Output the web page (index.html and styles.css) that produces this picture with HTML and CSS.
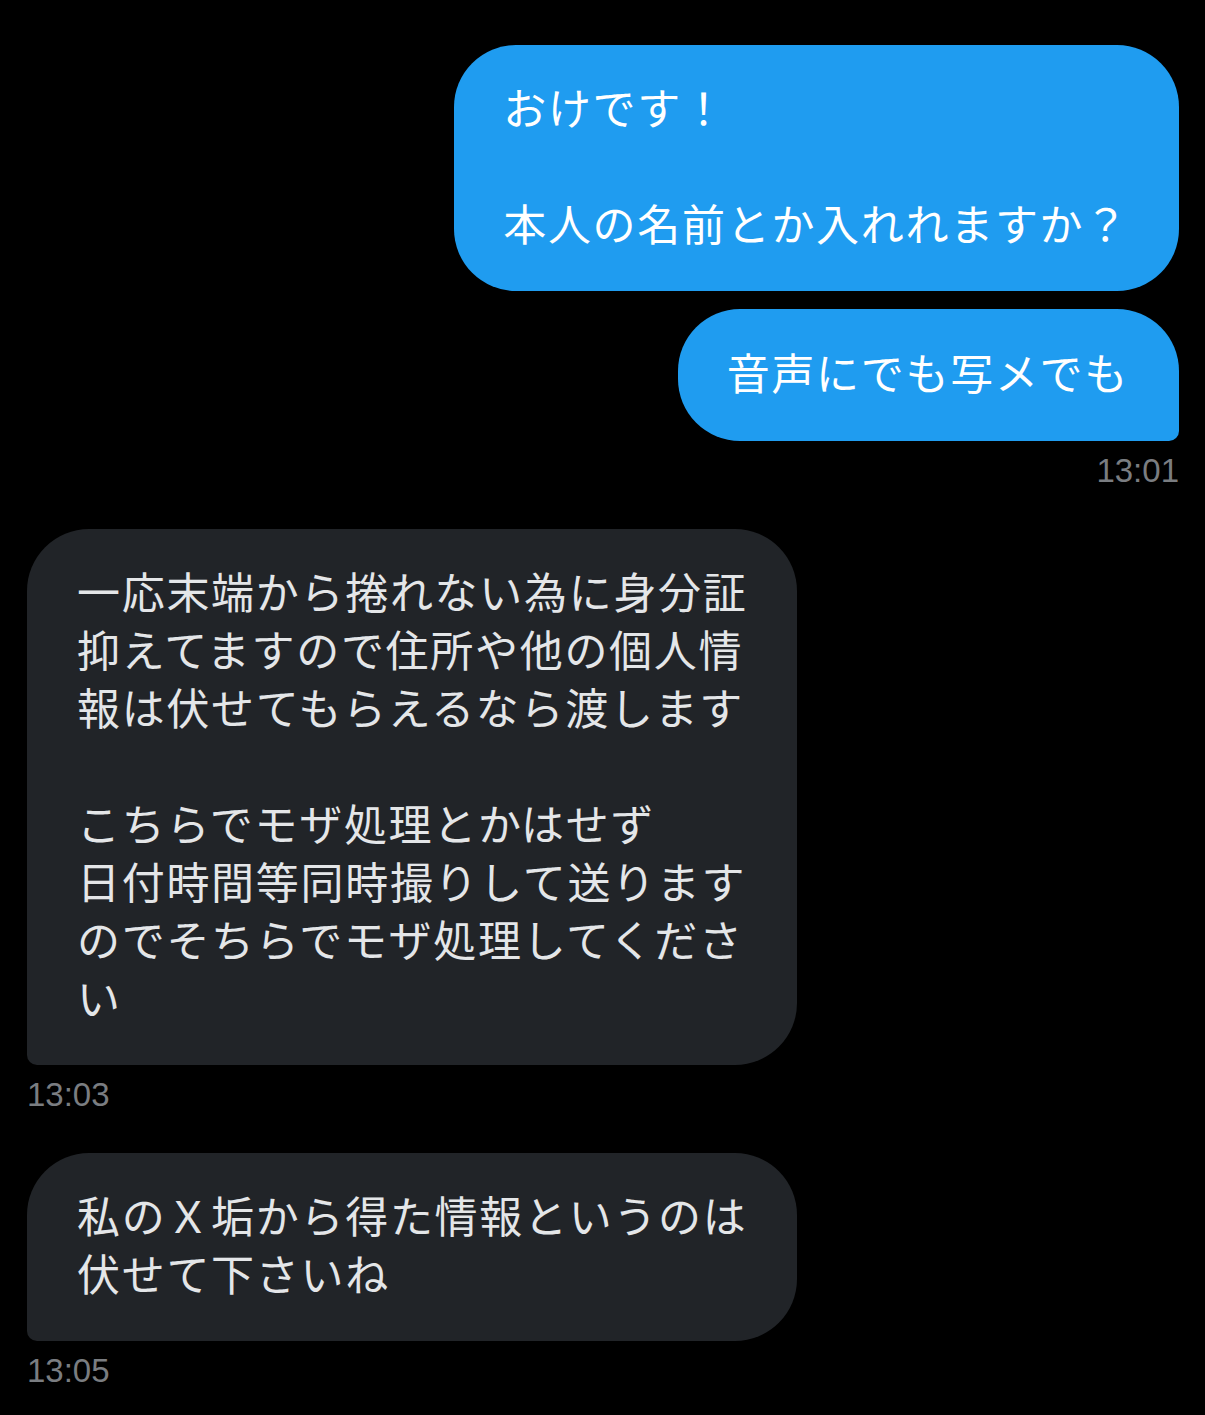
FILE: index.html
```html
<!DOCTYPE html>
<html lang="ja">
<head>
<meta charset="utf-8">
<link rel="stylesheet" href="styles.css">
</head>
<body>
<div class="chat">
  <div class="group sent">
    <div class="bubble out first">おけです！<br><br>本人の名前とか入れれますか？</div>
    <div class="bubble out last">音声にでも写メでも</div>
    <div class="time">13:01</div>
  </div>
  <div class="group received">
    <div class="bubble in">一応末端から捲れない為に身分証<br>抑えてますので住所や他の個人情<br>報は伏せてもらえるなら渡します<br><br>こちらでモザ処理とかはせず<br>日付時間等同時撮りして送ります<br>のでそちらでモザ処理してくださ<br>い</div>
    <div class="time">13:03</div>
  </div>
  <div class="group received">
    <div class="bubble in">私のＸ垢から得た情報というのは<br>伏せて下さいね</div>
    <div class="time">13:05</div>
  </div>
</div>
</body>
</html>
```

FILE: styles.css
```css
html, body {
  margin: 0;
  padding: 0;
  background: #000;
}
body {
  width: 1205px;
  min-height: 1415px;
  font-family: "Noto Sans CJK JP", "Noto Sans", sans-serif;
}
.chat {
  display: flex;
  flex-direction: column;
  padding: 45px 26px 0 27px;
}
.group {
  display: flex;
  flex-direction: column;
  margin-bottom: 38px;
}
.sent { align-items: flex-end; }
.received { align-items: flex-start; }
.bubble {
  font-size: 43px;
  letter-spacing: 1.7px;
  line-height: 58px;
  padding: 32px 50px 40px 49px;
  box-sizing: border-box;
  white-space: nowrap;
}
.out {
  background: #1f9cf0;
  color: #fff;
  border-radius: 62px;
}
.out.first { margin-bottom: 18px; }
.out.last {
  border-bottom-right-radius: 10px;
  padding-top: 33px;
  padding-bottom: 41px;
}
.in {
  background: #212428;
  color: #e4e6e8;
  width: 770px;
  border-radius: 62px 62px 62px 10px;
  padding-left: 50px;
}
.time {
  font-family: "Liberation Sans", Arial, sans-serif;
  font-size: 33px;
  line-height: 40px;
  margin-top: 10px;
  color: #7a7d81;
}
```
